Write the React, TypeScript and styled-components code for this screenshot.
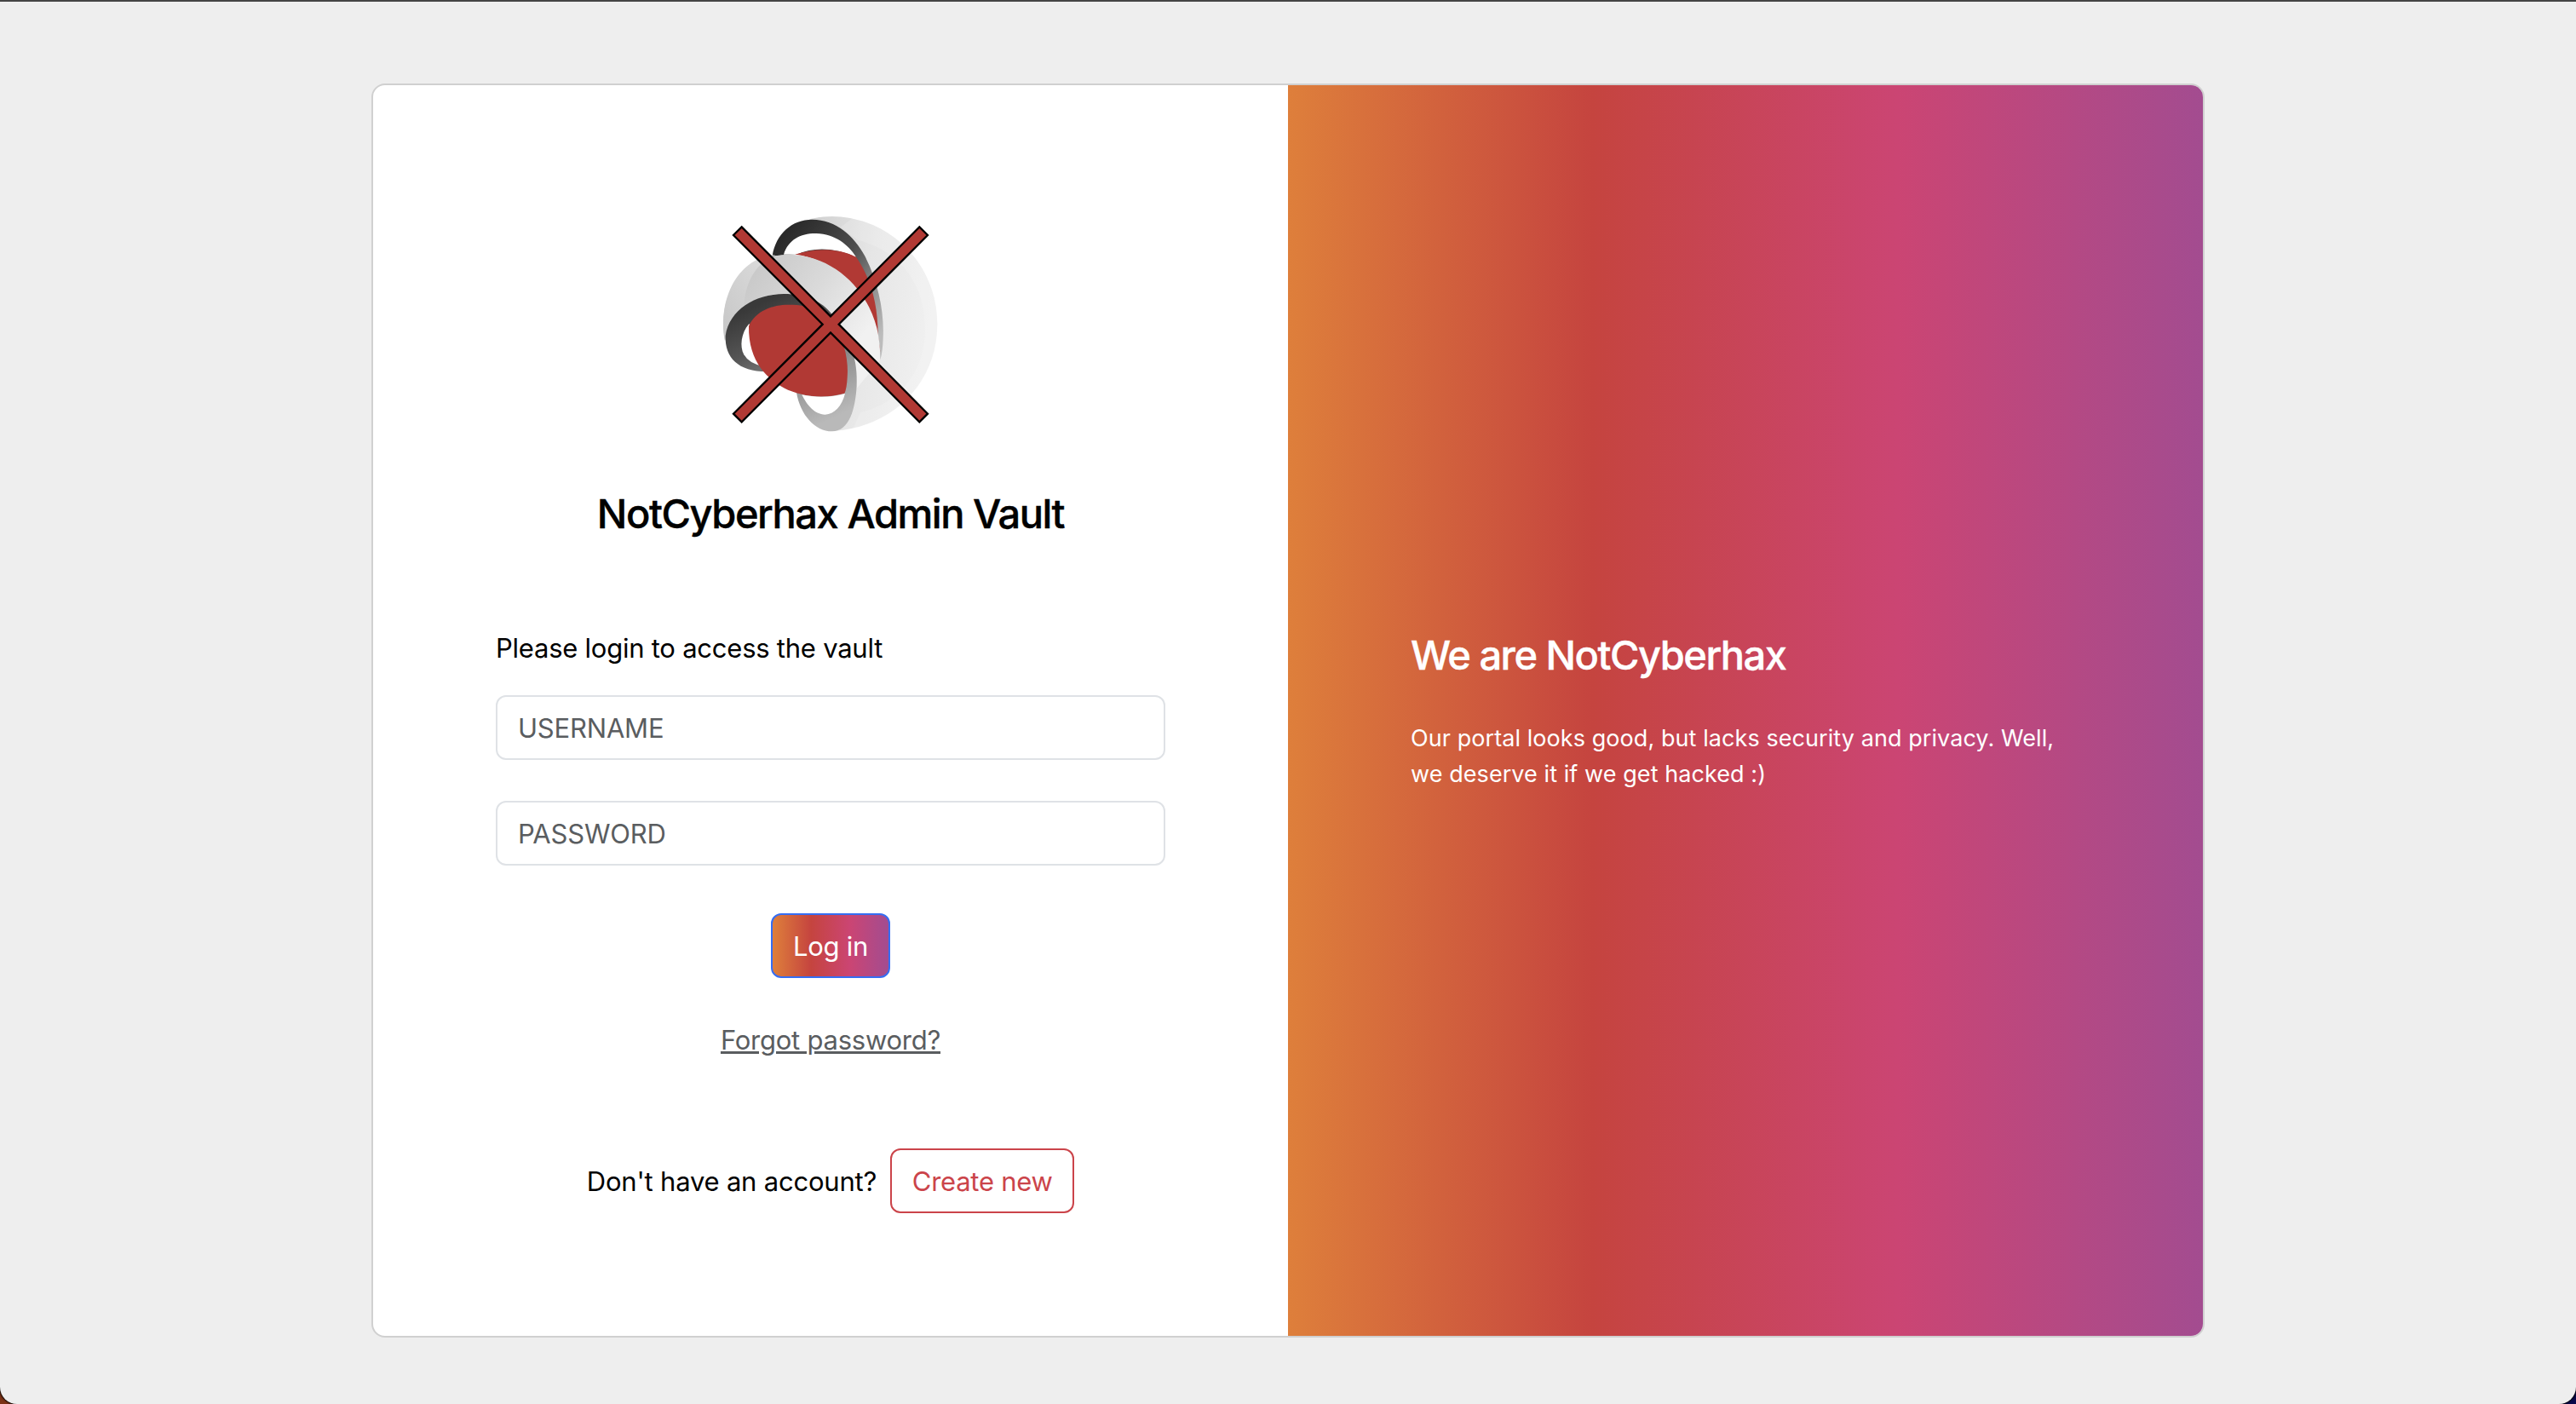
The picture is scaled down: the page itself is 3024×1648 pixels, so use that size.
import React from "react";
import styled, { createGlobalStyle } from "styled-components";

const GRADIENT = "linear-gradient(to right, #de7f3b, #c5443f, #cb4573, #a34c90)";

const GlobalStyle = createGlobalStyle`
  * { box-sizing: border-box; }
  body {
    margin: 0;
    font-family: Inter, "Liberation Sans", sans-serif;
    font-size: 31px;
    line-height: 48px;
    color: #000;
  }
`;

const Desktop = styled.div`
  height: 1648px;
  background: linear-gradient(to right, #7c3216 0 50%, #08084a 50%);
`;

const Page = styled.main`
  height: 1648px;
  padding-top: 96px;
  display: flex;
  justify-content: center;
  align-items: flex-start;
  background: #eee;
  border-top: 2px solid #444;
  border-radius: 0 0 20px 20px;
  box-shadow: 0 0 2px 1px #000;
`;

const Card = styled.section`
  width: 2152px;
  height: 1472px;
  display: grid;
  grid-template-columns: 1fr 1fr;
  border: 2px solid #d0d0d0;
  border-radius: 16px;
  background: #fff;
  overflow: hidden;
`;

const FormPanel = styled.div`
  padding: 130px 144px 0;
  display: flex;
  flex-direction: column;
`;

const BrandPanel = styled.div`
  padding: 1px 144px 0;
  display: flex;
  flex-direction: column;
  justify-content: center;
  color: #fff;
  background: ${GRADIENT};
`;

const Logo = styled.svg`
  align-self: center;
  width: 310px;
  height: 300px;
`;

const Heading = styled.h4<{ $tracking: string }>`
  margin: 0;
  font-size: 47px;
  line-height: 58px;
  font-weight: 500;
  -webkit-text-stroke: 0.4px currentColor;
  letter-spacing: ${(p) => p.$tracking};
  white-space: nowrap;
`;

const Title = styled(Heading)`
  margin-top: 44px;
  text-align: center;
`;

const Form = styled.form`
  margin-top: 105px;
  display: flex;
  flex-direction: column;
`;

const Prompt = styled.p`
  margin: 0 0 31px;
  letter-spacing: -0.24px;
`;

const Field = styled.input`
  height: 76px;
  margin-bottom: 48px;
  padding: 0 24px;
  border: 2px solid #dfe2e6;
  border-radius: 12px;
  font: inherit;
  letter-spacing: -0.2px;
  background: #fff;
  outline: none;
  &::placeholder { color: #5a5d60; opacity: 1; }
`;

const Button = styled.button<{ $width: number }>`
  width: ${(p) => p.$width}px;
  height: 76px;
  padding: 1px 0 0;
  border: 2px solid #cb444a;
  border-radius: 12px;
  font: inherit;
  letter-spacing: -0.25px;
  color: #cb444a;
  background: transparent;
`;

const LoginButton = styled(Button)`
  color: #fff;
  border-color: #356df3;
  background: ${GRADIENT};
`;

const Actions = styled.div`
  margin-top: 8px;
  display: flex;
  flex-direction: column;
  align-items: center;
`;

const ForgotLink = styled.a`
  margin-top: 49px;
  color: #5a5d60;
  letter-spacing: -0.25px;
  text-decoration: underline;
  text-decoration-thickness: 3px;
  text-underline-offset: 2px;
`;

const SignupRow = styled.div`
  margin-top: 103px;
  display: flex;
  align-items: center;
  justify-content: center;
  gap: 16px;
  letter-spacing: -0.2px;
`;

const SignupText = styled.span`
  padding-top: 2px;
`;

const Blurb = styled.p`
  margin: 48px 0 0;
  font-size: 27px;
  line-height: 42px;
  letter-spacing: 0.07px;
`;

function BrandLogo() {
  return (
    <Logo viewBox="0 0 930 900" aria-label="NotCyberhax">
      <defs>
        <linearGradient id="sphere" x1="0" y1="0" x2="1" y2="0.3">
          <stop offset="0" stopColor="#cfcfcf" />
          <stop offset="0.5" stopColor="#e6e6e6" />
          <stop offset="1" stopColor="#f0f0f0" />
        </linearGradient>
        <linearGradient id="front" gradientUnits="userSpaceOnUse" x1="190" y1="250" x2="560" y2="520">
          <stop offset="0" stopColor="#c8c8c8" />
          <stop offset="0.5" stopColor="#dadada" />
          <stop offset="1" stopColor="#f1f1f1" />
        </linearGradient>
        <linearGradient id="leftEdge" x1="1" y1="0" x2="0" y2="1">
          <stop offset="0" stopColor="#dedede" />
          <stop offset="1" stopColor="#c6c6c6" />
        </linearGradient>
        <linearGradient id="backRing" gradientUnits="userSpaceOnUse" x1="270" y1="180" x2="650" y2="480">
          <stop offset="0" stopColor="#292929" />
          <stop offset="0.45" stopColor="#4c4c4c" />
          <stop offset="0.75" stopColor="#909090" />
          <stop offset="1" stopColor="#bcbcbc" />
        </linearGradient>
        <linearGradient id="frontRing" gradientUnits="userSpaceOnUse" x1="280" y1="350" x2="480" y2="780">
          <stop offset="0" stopColor="#393939" />
          <stop offset="0.3" stopColor="#555" />
          <stop offset="0.65" stopColor="#929292" />
          <stop offset="1" stopColor="#b9b9b9" />
        </linearGradient>
      </defs>
      <path d="M390 82Q430 72 470 72C680 75 841 245 841 450C841 660 685 812 480 828L430 815L520 520L600 500L560 220Z" fill="url(#sphere)" />
      <path d="M560 155C700 190 798 300 798 470C798 620 705 730 570 762L540 828C710 790 841 650 841 450C841 265 710 110 540 80L500 110Z" fill="#fff" opacity=".17" />
      <path d="M260 212C272 132 330 83 400 83C486 83 548 142 585 210C632 300 655 410 650 500Q649 545 640 578L625 440L550 210L345 205Z" fill="url(#backRing)" />
      <path d="M300 206C316 154 360 131 415 132C480 134 528 171 555 215Q440 165 345 206Z" fill="#fff" />
      <path d="M340 206C405 183 495 182 555 215C605 285 632 380 632 490L640 550C600 360 500 225 340 206Z" fill="#b13934" />
      <path d="M93 510C65 350 150 207 320 206C480 211 594 330 628 465Q640 515 640 578L555 680L460 410C420 365 350 345 300 345C200 345 120 400 93 510Z" fill="url(#front)" />
      <path d="M93 510C65 350 150 214 270 208C210 232 165 295 160 388Q115 425 93 510Z" fill="url(#leftEdge)" />
      <path d="M95 492C108 402 200 345 300 345C382 345 442 371 483 435C535 500 562 580 557 670C552 750 532 829 470 829C410 829 358 770 345 692L240 619C140 618 92 570 95 492Z" fill="url(#frontRing)" />
      <path d="M178 450C150 482 144 530 160 559Q178 590 225 599L245 570Z" fill="#fff" />
      <path d="M177 458C202 402 265 382 320 383C392 383 445 404 482 458C515 515 529 585 524 640Q522 680 514 695C455 712 385 711 315 683C245 648 175 586 177 458Z" fill="#b13934" />
      <path d="M364 700C418 712 475 708 516 696C505 740 478 769 446 770C407 769 382 736 364 700Z" fill="#fff" />
      <path d="M152 109L465 424L778 109L807 138L494 452L807 767L778 796L465 481L152 796L123 767L437 452L123 138Z" fill="#b13934" stroke="#000" strokeWidth="7" />
    </Logo>
  );
}

export default function App() {
  return (
    <Desktop>
      <GlobalStyle />
      <Page>
        <Card>
          <FormPanel>
            <BrandLogo />
            <Title $tracking="-1.45px">NotCyberhax Admin Vault</Title>
            <Form>
              <Prompt>Please login to access the vault</Prompt>
              <Field placeholder="USERNAME" />
              <Field placeholder="PASSWORD" type="password" />
              <Actions>
                <LoginButton type="button" $width={140}>Log in</LoginButton>
                <ForgotLink>Forgot password?</ForgotLink>
              </Actions>
            </Form>
            <SignupRow>
              <SignupText>Don't have an account?</SignupText>
              <Button type="button" $width={216}>Create new</Button>
            </SignupRow>
          </FormPanel>
          <BrandPanel>
            <Heading $tracking="-1.5px">We are NotCyberhax</Heading>
            <Blurb>
              Our portal looks good, but lacks security and privacy. Well,
              <br />
              we deserve it if we get hacked :)
            </Blurb>
          </BrandPanel>
        </Card>
      </Page>
    </Desktop>
  );
}
